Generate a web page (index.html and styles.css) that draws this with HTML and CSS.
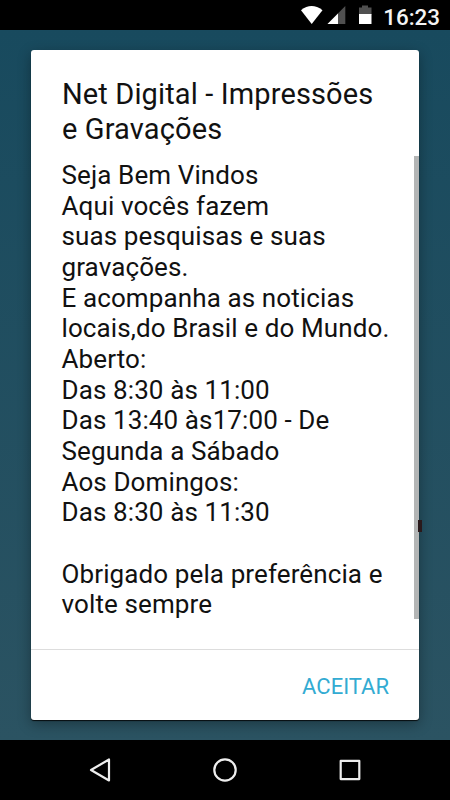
FILE: index.html
```html
<!DOCTYPE html>
<html lang="pt-BR">
<head>
<meta charset="utf-8">
<title>Net Digital</title>
<link rel="stylesheet" href="styles.css">
</head>
<body>
<header class="status">
<svg class="status-icons" width="76" height="30" viewBox="0 0 76 30"><path d="M2 10.2Q12.5 2 23.5 10.2L12.7 24Z" fill="#fff"/><path d="M46.3 6V24H28.5Z" fill="#505050"/><path d="M39 13.4V24H28.5Z" fill="#fff"/><path d="M60 7.5h3V5.5h6v2h3.500V15H60Z" fill="#505050"/><path d="M60 14h12.500v10H60Z" fill="#fff"/></svg>
<span class="clock">16:23</span>
</header>
<main class="screen">
<section class="dialog">
<h1 class="title">Net Digital - Impressões<br>e Gravações</h1>
<div class="content"><p class="message">Seja Bem Vindos
Aqui vocês fazem
suas pesquisas e suas
gravações.
E acompanha as noticias
locais,do Brasil e do Mundo.
Aberto:
Das 8:30 às 11:00
Das 13:40 às17:00 - De
Segunda a Sábado
Aos Domingos:
Das 8:30 às 11:30

Obrigado pela preferência e
volte sempre</p><div class="scrollbar"></div></div>
<footer class="actions"><button class="accept">ACEITAR</button></footer>
</section>
<i class="mark"></i>
</main>
<nav class="nav">
<svg width="450" height="60" viewBox="0 0 450 60" fill="none" stroke="#eee" stroke-width="2.200" stroke-linejoin="round"><path d="M109 19.500V40.500L91 30Z"/><circle cx="225" cy="30" r="10.700"/><path d="M340.700 20.900H359.300V39.100H340.700Z"/></svg>
</nav>
</body>
</html>
```

FILE: styles.css
```css
* { box-sizing: border-box; }
body { margin: 0; width: 450px; height: 800px; overflow: hidden; display: flex; flex-direction: column; background: #000; font-family: Roboto, sans-serif; }
.status { height: 30px; display: flex; justify-content: flex-end; align-items: center; padding-right: 10px; color: #fff; }
.status-icons { margin-right: 7px; }
.clock { width: 58px; padding-top: 4px; font-size: 22.4px; font-weight: 500; line-height: 30px; text-align: right; color: #f4f4f4; }
.screen { position: relative; height: 710px; padding: 20px 31px; background: linear-gradient(#184a5e, #2b5362); }
.dialog { height: 670px; background: #fff; border-radius: 3px; box-shadow: 0 1px 1px #000c, 0 4px 14px #0005; display: flex; flex-direction: column; }
.title { margin: 0; padding: 27px 30px 0 31px; height: 106px; font-size: 29px; font-weight: 400; line-height: 34.5px; letter-spacing: .13px; color: #111; white-space: nowrap; }
.content { height: 493px; display: flex; justify-content: space-between; }
.message { margin: 0; padding: 4px 0 0 30.5px; font-size: 26px; line-height: 30.65px; letter-spacing: .11px; white-space: pre; color: #111; }
.scrollbar { width: 5px; height: 463px; background: #b3b5b5; }
.actions { flex: 1; border-top: 1px solid #ddd; display: flex; align-items: center; justify-content: flex-end; padding: 2px 30px 0 0; }
.accept { border: 0; padding: 0; background: none; font: 400 22px Roboto, sans-serif; color: #33abd2; }
.mark { position: absolute; left: 418px; top: 490px; width: 4px; height: 12px; background: #2a191b; }
.nav { height: 60px; }
.nav svg { display: block; }
```
